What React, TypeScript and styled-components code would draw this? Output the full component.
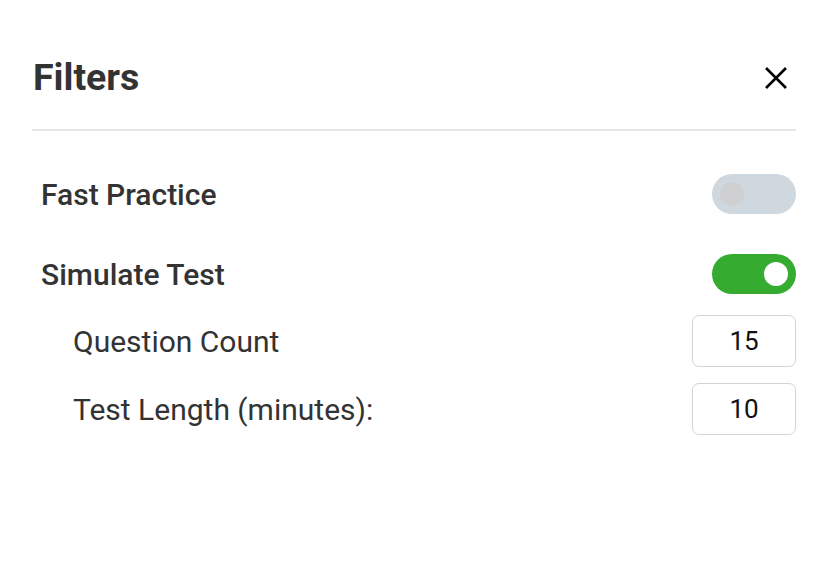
import { useState } from "react";
import styled, { createGlobalStyle } from "styled-components";

const GlobalStyle = createGlobalStyle`
  html, body {
    margin: 0;
    padding: 0;
    background: #fff;
    font-family: Roboto, "Liberation Sans", sans-serif;
  }
`;

export default function App() {
  const [fast, setFast] = useState(false);
  const [simulate, setSimulate] = useState(true);
  const [count, setCount] = useState("15");
  const [length, setLength] = useState("10");

  return (
    <>
      <GlobalStyle />
      <Panel>
        <Header>
          <Title>Filters</Title>
          <CloseButton aria-label="Close">
            <svg width="22" height="22" viewBox="0 0 22 22">
              <path d="M1 1 L21 21 M21 1 L1 21" stroke="#000" strokeWidth="2.6" strokeLinecap="butt" />
            </svg>
          </CloseButton>
        </Header>
        <Body>
          <ToggleRow>
            <Label>Fast Practice</Label>
            <Switch $on={fast} onClick={() => setFast(!fast)}>
              <Knob $on={fast} />
            </Switch>
          </ToggleRow>
          <ToggleRow>
            <Label>Simulate Test</Label>
            <Switch $on={simulate} onClick={() => setSimulate(!simulate)}>
              <Knob $on={simulate} />
            </Switch>
          </ToggleRow>
          <SubGroup>
            <SubRow>
              <SubLabel>Question Count</SubLabel>
              <NumberInput value={count} onChange={(e) => setCount(e.target.value)} />
            </SubRow>
            <SubRow>
              <SubLabel>Test Length (minutes):</SubLabel>
              <NumberInput value={length} onChange={(e) => setLength(e.target.value)} />
            </SubRow>
          </SubGroup>
        </Body>
      </Panel>
    </>
  );
}

const Panel = styled.div`
  padding: 0 17px 0 32px;
`;

const Header = styled.div`
  display: flex;
  align-items: center;
  justify-content: space-between;
  height: 131px;
  padding: 50px 0 23px;
  box-sizing: border-box;
  border-bottom: 2px solid #e6e6e6;
`;

const Title = styled.h2`
  margin: 0 0 0 1px;
  font-size: 37.5px;
  font-weight: 700;
  color: #333;
  line-height: 1;
`;

const CloseButton = styled.button`
  border: 0;
  background: none;
  padding: 0;
  margin-right: 9px;
  display: flex;
  cursor: pointer;
`;

const Body = styled.div`
  padding: 43px 0 0 9px;
  display: flex;
  flex-direction: column;
  gap: 40px;
`;

const ToggleRow = styled.div`
  display: flex;
  align-items: center;
  justify-content: space-between;
  height: 40px;
`;

const Label = styled.span`
  font-size: 30px;
  font-weight: 500;
  color: #333;
`;

const Switch = styled.button<{ $on: boolean }>`
  width: 84px;
  height: 40px;
  border-radius: 20px;
  border: 0;
  padding: 0 8px;
  display: flex;
  align-items: center;
  justify-content: ${(p) => (p.$on ? "flex-end" : "flex-start")};
  background: ${(p) => (p.$on ? "#35ac2f" : "#cfd8df")};
  cursor: pointer;
`;

const Knob = styled.span<{ $on: boolean }>`
  width: 24px;
  height: 24px;
  border-radius: 50%;
  background: ${(p) => (p.$on ? "#fff" : "#d0d0d2")};
`;

const SubGroup = styled.div`
  margin-top: -19px;
  padding-left: 32px;
  display: flex;
  flex-direction: column;
  gap: 16px;
`;

const SubRow = styled.div`
  display: flex;
  align-items: center;
  justify-content: space-between;
  height: 52px;
`;

const SubLabel = styled.span`
  font-size: 30px;
  font-weight: 400;
  color: #333;
`;

const NumberInput = styled.input`
  width: 104px;
  height: 52px;
  box-sizing: border-box;
  border: 1.5px solid #d4d4d4;
  border-radius: 7px;
  text-align: center;
  font-family: Roboto, "Liberation Sans", sans-serif;
  font-size: 26px;
  color: #111;
  outline: none;
`;
